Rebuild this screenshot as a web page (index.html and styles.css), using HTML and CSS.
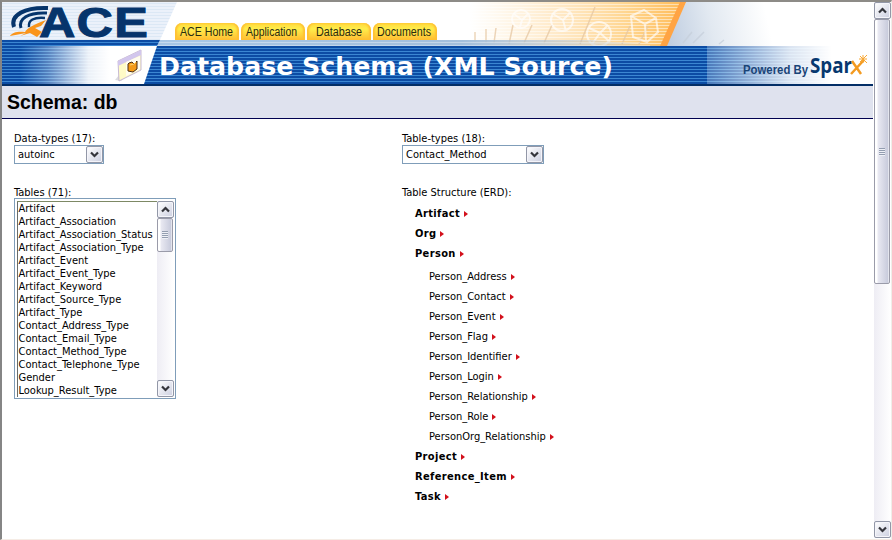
FILE: index.html
```html
<!DOCTYPE html>
<html lang="en">
<head>
<meta charset="utf-8">
<title>Database Schema (XML Source)</title>
<link rel="stylesheet" href="styles.css">
</head>
<body>
<div class="window">
<main class="page">
<header class="banner">
<svg class="art" width="871" height="84" viewBox="2 2 871 84" aria-hidden="true">
<defs>
<pattern id="lines" width="4" height="3" patternUnits="userSpaceOnUse"><rect width="4" height="3" fill="#0c4ca4"/><rect width="4" height="1" fill="#3b87d2"/></pattern>
<pattern id="pale" width="4" height="3" patternUnits="userSpaceOnUse"><rect width="4" height="3" fill="#ebf1fa"/><rect width="4" height="1" fill="#dce8f5"/></pattern>
<pattern id="white" width="4" height="3" patternUnits="userSpaceOnUse"><rect width="4" height="1" y="1" fill="#fff" fill-opacity=".5"/></pattern>
<linearGradient id="orange"><stop offset="0" stop-color="#ffe4b8" stop-opacity="0"/><stop offset=".35" stop-color="#ffe0b0" stop-opacity=".6"/><stop offset=".75" stop-color="#ffd38a"/><stop offset="1" stop-color="#ffba55"/></linearGradient>
<linearGradient id="steel" gradientUnits="userSpaceOnUse" x1="665" y1="30" x2="765" y2="8"><stop offset="0" stop-color="#bfcde0"/><stop offset=".45" stop-color="#e2e9f1"/><stop offset="1" stop-color="#fff"/></linearGradient>
<linearGradient id="fade"><stop offset="0" stop-color="#fff" stop-opacity="0"/><stop offset=".2" stop-color="#fff" stop-opacity=".3"/><stop offset=".5" stop-color="#fff" stop-opacity=".92"/><stop offset=".65" stop-color="#fff"/></linearGradient>
<linearGradient id="fade2"><stop offset="0" stop-color="#fff" stop-opacity=".25"/><stop offset=".5" stop-color="#fff" stop-opacity=".85"/><stop offset=".75" stop-color="#fff"/></linearGradient>
<linearGradient id="strip"><stop offset="0" stop-color="#a7c7e6"/><stop offset=".6" stop-color="#a3bfdc"/><stop offset="1" stop-color="#b9bbb7" stop-opacity=".1"/></linearGradient>
</defs>
<rect x="2" y="2" width="871" height="84" fill="#fff"/>
<path d="M2 2H177L160 40H2z" fill="url(#pale)"/>
<path d="M470 2H686L665 46H470z" fill="url(#orange)"/>
<rect x="470" y="2" width="212" height="43" fill="url(#white)"/>
<path d="M686 2H790V46H665z" fill="url(#steel)"/>
<path d="M680 2h6L667 46h-7z" fill="#ffa444"/>
<g fill="none" stroke="#e6c7a3" stroke-width="1.5" opacity=".75"><path d="M475 32v10M486 29v14M496 28l-2 15M513 25l-4 19M532 25l-8 18M552 25l-8 18M595 7l-15 37M630 26l-8 18M648 26l-9 18"/><path d="M692 32l-9 11M704 32l-11 11M724 40l-5 4" stroke="#c6cfdb"/></g>
<g fill="none" stroke="#fff" stroke-width="2" opacity=".65"><circle cx="521" cy="19" r="9"/><path d="M514 14l8 6 6-6M522 20l-2 7"/><circle cx="562" cy="20" r="11"/><path d="M553 14l10 6 8-8M563 20l3 11"/><circle cx="599" cy="34" r="12"/><path d="M589 28l11 5 8-8M600 33l-8 11M600 33l10 9"/><path d="M631 16l13-6 12 8 2 14-11 10-14-5zM631 16l14 8 11-6M645 24l1 18"/></g>
<path d="M160 40H590L665 46H157z" fill="url(#strip)"/>
<path d="M158 42.5H640M157 45.500H650" stroke="#fff" opacity=".35"/>
<path d="M2 40H160L157 46H2z" fill="url(#lines)"/>
<path d="M2 46H873V84H2z" fill="url(#lines)"/>
<path d="M20 46H157L144 84H20z" fill="url(#fade)"/>
<path d="M707 46H873V84H707z" fill="url(#fade2)"/>
<path d="M2 84H873v2H2z" fill="#032e66"/>
<g fill="none" stroke="#06346b"><path d="M14 27C10 15 25 7 48 8" stroke-width="4"/><path d="M21 28C18 19 28 12 47 13" stroke-width="3"/><path d="M29 27C28 20 34 17 45 18" stroke-width="2.500"/></g>
<text x="39" y="37" class="ace" textLength="110" lengthAdjust="spacingAndGlyphs">ACE</text>
<path d="M10 36C12 32 19 31 25 32C27 28 35 24 46 20L41 26L35 28L42 32L37 37L30 33L20 36L26 33z" fill="#fa951b"/>
<path d="M115 80l18-22 2 12-14 11z" fill="#8c8c98" opacity=".3"/>
<path d="M118 61l23-11v20l-22 11z" fill="#fffbc7" stroke="#c7b9d3"/>
<path d="M118 61l23-11v5l-23 11z" fill="#d2c6ed"/><path d="M126 62l14-6v13l-14 7z" fill="#fffdf0"/>
<path d="M129 63l3-1 2 2 3-3v8l-4 3-5-1v-7z" fill="#f39a17" stroke="#4b2f12"/><path d="M130 65l4-1 2-2" stroke="#ffd56a" fill="none"/>
<text x="159" y="75" class="title" textLength="454" lengthAdjust="spacingAndGlyphs">Database Schema (XML Source)</text>
<text x="743" y="74" class="powered" textLength="65" lengthAdjust="spacingAndGlyphs">Powered By</text>
<text x="810" y="73" class="sparx" textLength="42" lengthAdjust="spacingAndGlyphs">Spar</text>
<path d="M852 61l9 13M864 60l-13 14" stroke="#f39a20" stroke-width="2.500" fill="none"/>
<path d="M863 55v8M859 59h8M860 56l7 7M867 55l-7 7" stroke="#f8a733" fill="none"/>
</svg>
<nav class="tabs">
<a class="tab"><svg width="64" height="17"><text x="5" y="13" textLength="53" lengthAdjust="spacingAndGlyphs">ACE Home</text></svg></a>
<a class="tab"><svg width="64" height="17"><text x="5" y="13" textLength="51" lengthAdjust="spacingAndGlyphs">Application</text></svg></a>
<a class="tab"><svg width="64" height="17"><text x="9" y="13" textLength="46" lengthAdjust="spacingAndGlyphs">Database</text></svg></a>
<a class="tab"><svg width="64" height="17"><text x="4" y="13" textLength="54" lengthAdjust="spacingAndGlyphs">Documents</text></svg></a>
</nav>
</header>
<h1 class="heading">Schema: db</h1>
<div class="columns">
<section class="left">
<div class="label">Data-types (17):</div>
<div class="select narrow"><span>autoinc</span><i class="button"><svg width="9" height="7"><path d="M1 1.500L4.500 5L8 1.500"/></svg></i></div>
<div class="label second">Tables (71):</div>
<div class="list">
<ul class="options"><li>Artifact</li><li>Artifact_Association</li><li>Artifact_Association_Status</li><li>Artifact_Association_Type</li><li>Artifact_Event</li><li>Artifact_Event_Type</li><li>Artifact_Keyword</li><li>Artifact_Source_Type</li><li>Artifact_Type</li><li>Contact_Address_Type</li><li>Contact_Email_Type</li><li>Contact_Method_Type</li><li>Contact_Telephone_Type</li><li>Gender</li><li>Lookup_Result_Type</li></ul>
<div class="bar"><i class="button"><svg width="9" height="7"><path d="M1 5.500L4.500 2L8 5.500"/></svg></i><i class="thumb small"><b class="grip"></b></i><i class="button end"><svg width="9" height="7"><path d="M1 1.500L4.500 5L8 1.500"/></svg></i></div>
</div>
</section>
<section class="right">
<div class="label">Table-types (18):</div>
<div class="select wide"><span>Contact_Method</span><i class="button"><svg width="9" height="7"><path d="M1 1.500L4.500 5L8 1.500"/></svg></i></div>
<div class="label second">Table Structure (ERD):</div>
<ul class="tree">
<li>Artifact</li><li>Org</li><li>Person</li>
<li class="group"><ul><li>Person_Address</li><li>Person_Contact</li><li>Person_Event</li><li>Person_Flag</li><li>Person_Identifier</li><li>Person_Login</li><li>Person_Relationship</li><li>Person_Role</li><li>PersonOrg_Relationship</li></ul></li>
<li>Project</li><li>Reference_Item</li><li>Task</li>
</ul>
</section>
</div>
</main>
<div class="bar main-bar"><i class="button"><svg width="9" height="7"><path d="M1 5.500L4.500 2L8 5.500"/></svg></i><i class="thumb large"><b class="grip"></b></i><i class="button end"><svg width="9" height="7"><path d="M1 1.500L4.500 5L8 1.500"/></svg></i></div>
</div>
</body>
</html>
```
FILE: styles.css
```css
* { box-sizing: border-box; }
body { margin: 0; background: #fff; color: #000; font: 11px/13px "DejaVu Sans Condensed", "DejaVu Sans", sans-serif; font-stretch: condensed; overflow: hidden; }
ul { margin: 0; padding: 0; list-style: none; }
.window { display: flex; width: 892px; height: 540px; border: solid; border-width: 2px 1px 1px 2px; border-color: #8d8b87 #efeee9 #f5ece5 #858585; }
.page { width: 872px; background: #fff; }
.banner { position: relative; width: 871px; height: 84px; }
.art { position: absolute; inset: 0; }
.ace { font: bold 43px "Liberation Sans", sans-serif; letter-spacing: 1px; fill: #06346b; stroke: #06346b; stroke-width: 1px; }
.title { font: bold 25px "DejaVu Sans", sans-serif; fill: #fff; }
.powered { font: bold 13px "Liberation Sans", sans-serif; fill: #194477; }
.sparx { font: bold 21px "Open Sans", sans-serif; fill: #07386f; }
.tabs { position: relative; display: flex; gap: 2px; padding: 21px 0 0 173px; }
.tab { width: 64px; height: 17px; border-radius: 7px 7px 0 0; background: linear-gradient(#ffd83d, #ffed4b 35%, #ffbd32); box-shadow: inset 2px 0 2px #ffc033, inset -2px 0 2px #ffc033; }
.tab svg { display: block; }
.tab text { font: 12px "Liberation Sans", sans-serif; fill: #292c10; }
.heading { margin: 0; width: 871px; height: 33px; padding: 0 5px; border-bottom: 1px solid #000050; background: #dfe2ee; font: bold 19.5px/32px "Liberation Sans", sans-serif; }
.columns { display: flex; padding: 13px 0 0 12px; }
.left { width: 388px; }
.label { height: 13px; }
.select { display: flex; justify-content: space-between; height: 19px; border: 1px solid #7f9db9; padding-left: 3px; line-height: 18px; }
.narrow { width: 90px; }
.wide { width: 142px; }
.button { display: flex; flex: none; align-items: center; justify-content: center; width: 17px; height: 17px; border: 1px solid #9297a7; border-radius: 2px; background: linear-gradient(135deg, #fff, #cccfe0); box-shadow: inset 0 0 0 1px #f5f5fa; }
.button svg { fill: none; stroke: #34353b; stroke-width: 2.2px; }
.second { margin-top: 22px; }
.list { display: flex; justify-content: space-between; width: 162px; height: 201px; border: 1px solid #7f9db9; padding: 2px 1px 2px 2px; margin-top: -1px; }
.options { flex: 1; height: 195px; margin-top: 1px; border-left: 1px solid #696c69; padding-left: 1px; box-shadow: 0 -1px #7d8965; white-space: nowrap; }
.options li { margin-left: -.5px; }
.bar { display: flex; flex-direction: column; width: 17px; background: linear-gradient(90deg, #eeedf4, #fff); }
.thumb { display: flex; align-items: center; justify-content: center; width: 16px; border: 1px solid #9a9ba9; border-radius: 2px; background: linear-gradient(90deg, #fff 2px, #e9e9f2 3px, #c8cbdc 13px, #fff 14px); }
.small { height: 34px; }
.large { height: 265px; }
.grip { width: 6px; height: 8px; background: repeating-linear-gradient(#939db0 0 1px, #eef0f6 1px 2px); }
.end { margin-top: auto; }
.main-bar { height: 536px; }
.list .bar { height: 196px; }
.tree { padding: 5px 0 0 13px; font-weight: bold; line-height: 20px; letter-spacing: .35px; }
.tree > li { height: 20px; }
.tree > .group { height: auto; padding: 3px 0 0 14px; font-weight: normal; letter-spacing: 0; }
.tree li:not(.group)::after { content: ""; display: inline-block; margin-left: 4px; border: solid transparent; border-width: 3.500px 0 3.500px 4px; border-left-color: #d3101b; vertical-align: 0; }
```
